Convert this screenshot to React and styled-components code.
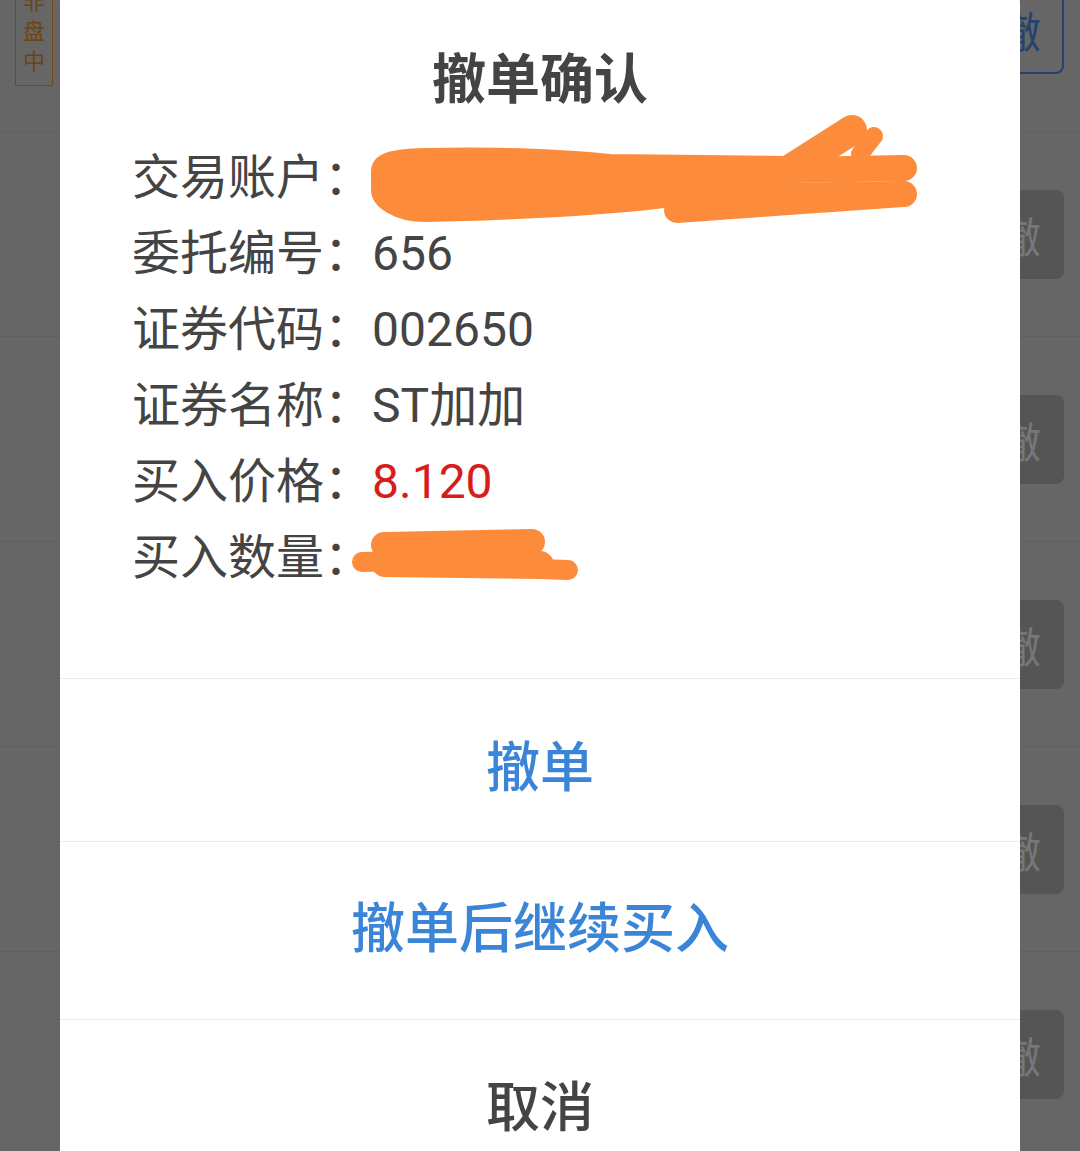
import React from 'react';
import styled, { createGlobalStyle } from 'styled-components';

const GlobalStyle = createGlobalStyle`
  html, body {
    margin: 0;
    padding: 0;
    height: 100%;
    overflow: hidden;
    background: #666666;
  }
  body {
    font-family: Roboto, "Noto Sans CJK SC", sans-serif;
  }
`;

const orders = [
  { id: 1, status: true, current: true },
  { id: 2 },
  { id: 3 },
  { id: 4 },
  { id: 5 },
  { id: 6 },
];

const info = [
  { label: '交易账户', value: '' },
  { label: '委托编号', value: '656' },
  { label: '证券代码', value: '002650' },
  { label: '证券名称', value: 'ST加加' },
  { label: '买入价格', value: '8.120', color: '#d71c1c' },
  { label: '买入数量', value: '' },
];

export default function App() {
  return (
    <>
      <GlobalStyle />
      <OrderList>
        {orders.map((o) => (
          <OrderRow key={o.id}>
            {o.status && (
              <StatusTag>
                <span>非</span>
                <span>盘</span>
                <span>中</span>
              </StatusTag>
            )}
            <RevokeButton $outline={o.current}>撤</RevokeButton>
          </OrderRow>
        ))}
      </OrderList>

      <Dialog>
        <Title>撤单确认</Title>
        <InfoList>
          {info.map((row) => (
            <InfoRow key={row.label}>
              <span>{row.label}：</span>
              <Value $color={row.color}>{row.value}</Value>
            </InfoRow>
          ))}
        </InfoList>
        <Action $height={163} $top={7}>撤单</Action>
        <Action $height={178} $bottom={12}>撤单后继续买入</Action>
        <Action $height={168} $color='#444444'>取消</Action>
        <Scribbles />
      </Dialog>
    </>
  );
}

// orange marker strokes hiding account number and quantity
function Scribbles() {
  return (
    <ScribbleLayer viewBox='60 -12 960 700' width='960' height='700'>
      <g fill='#fc8c3c' stroke='#fc8c3c' strokeLinecap='round' strokeLinejoin='round'>
        <path
          strokeWidth='4'
          d='M 373 172 C 373 154, 392 151, 425 150 C 500 148, 560 151, 610 156 L 790 158 L 796 196 C 740 200, 690 204, 664 206 C 600 214, 500 219, 425 220 C 396 220, 373 206, 373 190 Z'
        />
        <path fill='none' strokeWidth='26' d='M 677 210 L 902 194' />
        <path fill='none' strokeWidth='30' d='M 786 172 L 852 130' />
        <path fill='none' strokeWidth='18' d='M 874 136 L 860 154' />
        <path fill='none' strokeWidth='26' d='M 792 170 L 904 168' />
        <path fill='none' strokeWidth='26' d='M 782 196 L 904 194' />

        <path fill='none' strokeWidth='26' d='M 384 545 L 532 542' />
        <path fill='none' strokeWidth='28' d='M 385 563 L 540 565' />
        <path fill='none' strokeWidth='20' d='M 362 562 L 400 561' />
        <path fill='none' strokeWidth='20' d='M 540 569 L 568 570' />
      </g>
    </ScribbleLayer>
  );
}

const OrderList = styled.div`
  margin-top: -73px;
`;

const OrderRow = styled.div`
  height: 204px;
  border-bottom: 1px solid #5e5e5e;
  display: flex;
  align-items: center;
  padding: 0 16px 0 15px;
`;

const StatusTag = styled.div`
  width: 36px;
  height: 111px;
  border: 1px solid #744812;
  color: #6e440f;
  font-family: "Noto Sans CJK SC", sans-serif;
  font-size: 22px;
  line-height: 30px;
  display: flex;
  flex-direction: column;
  align-items: center;
  justify-content: center;
`;

const RevokeButton = styled.div`
  margin-left: auto;
  width: 88px;
  height: 89px;
  box-sizing: border-box;
  border-radius: 8px;
  display: flex;
  align-items: center;
  justify-content: center;
  font-family: "Noto Sans CJK SC", sans-serif;
  font-size: 42px;
  background: ${(p) => (p.$outline ? 'transparent' : '#555555')};
  border: ${(p) => (p.$outline ? '2px solid #23426e' : 'none')};
  color: ${(p) => (p.$outline ? '#23426e' : '#777777')};
`;

const Dialog = styled.div`
  position: fixed;
  left: 60px;
  top: -12px;
  width: 960px;
  background: #ffffff;
  border-radius: 14px;
  display: flex;
  flex-direction: column;
`;

const Title = styled.div`
  margin-top: 50px;
  text-align: center;
  font-family: "Noto Sans CJK SC", sans-serif;
  font-size: 54px;
  font-weight: 700;
  line-height: 76px;
  color: #444444;
`;

const InfoList = styled.div`
  padding: 26px 0 82px 72px;
`;

const InfoRow = styled.div`
  display: flex;
  font-size: 48px;
  line-height: 76px;
  height: 76px;
  color: #444444;
  white-space: nowrap;
`;

const Value = styled.span`
  color: ${(p) => p.$color || '#444444'};
`;

const Action = styled.div`
  height: ${(p) => p.$height}px;
  box-sizing: border-box;
  padding-top: ${(p) => p.$top || 0}px;
  padding-bottom: ${(p) => p.$bottom || 0}px;
  border-top: 1px solid #ececec;
  display: flex;
  align-items: center;
  justify-content: center;
  font-family: "Noto Sans CJK SC", sans-serif;
  font-size: 54px;
  font-weight: 500;
  color: ${(p) => p.$color || '#3a85d8'};
`;

const ScribbleLayer = styled.svg`
  position: absolute;
  left: 0;
  top: 0;
  pointer-events: none;
`;
